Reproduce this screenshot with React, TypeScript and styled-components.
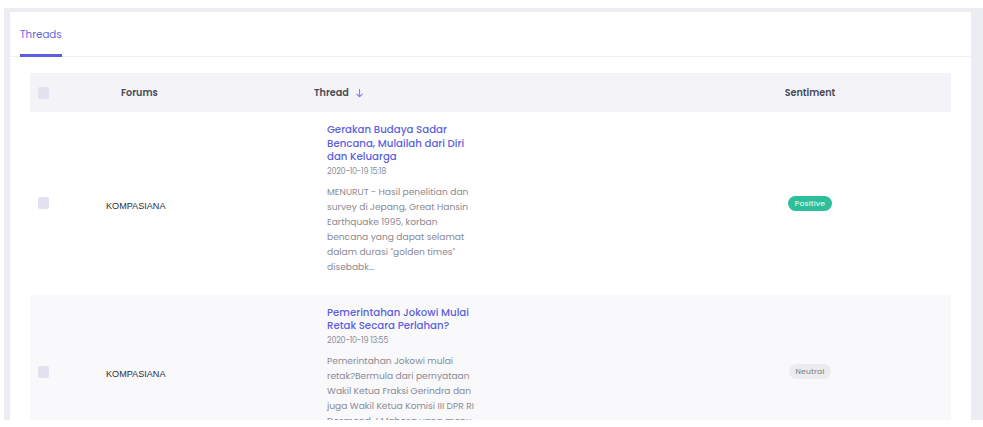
import React from "react";
import styled, { createGlobalStyle } from "styled-components";

const Global = createGlobalStyle`
  html, body { margin: 0; padding: 0; background: #ffffff; }
  body { font-family: "Poppins", "Inter", "Open Sans", sans-serif; }
  * { box-sizing: border-box; }
`;

const Frame = styled.div`
  margin: 8px 0 0 4px;
  height: 412px;
  background: #ececf3;
  padding: 4px 12px 0 6px;
  overflow: hidden;
`;

const Card = styled.div`
  background: #ffffff;
  height: 100%;
  display: flex;
  flex-direction: column;
`;

const Tabs = styled.div`
  display: flex;
  padding: 0 10px;
  border-bottom: 1px solid #f0f0f4;
`;

const Tab = styled.div<{ $active?: boolean }>`
  font-size: 10.3px;
  line-height: 18px;
  color: ${(p) => (p.$active ? "#6466de" : "#777")};
  padding: 14px 0 10px;
  border-bottom: 3px solid ${(p) => (p.$active ? "#5a5ee0" : "transparent")};
  margin-bottom: -1px;
`;

const TableWrap = styled.div`
  padding: 16px 20px 0;
`;

const Grid = styled.div`
  display: grid;
  grid-template-columns: 70px 200px 370px 280px;
`;

const HeadRow = styled(Grid)`
  background: #f3f3f8;
  height: 39px;
  align-items: center;
`;

const Row = styled(Grid)<{ $striped?: boolean }>`
  background: ${(p) => (p.$striped ? "#f9f9fb" : "#ffffff")};
  align-items: center;
`;

const Check = styled.span`
  display: block;
  width: 11px;
  height: 12px;
  border-radius: 2px;
  background: #e2e1ef;
  margin-left: 8px;
`;

const HeadCell = styled.div<{ $pad?: number; $center?: boolean }>`
  font-size: 9.6px;
  font-weight: 600;
  color: #4b4b57;
  padding-left: ${(p) => p.$pad ?? 0}px;
  display: flex;
  align-items: center;
  justify-content: ${(p) => (p.$center ? "center" : "flex-start")};
  gap: 6px;
`;

const SortArrow = styled.svg`
  width: 9px;
  height: 10px;
`;

const Forum = styled.div`
  font-family: "Liberation Sans", Arial, sans-serif;
  font-size: 9.1px;
  color: #2e2e36;
  padding-left: 6px;
  padding-top: 5px;
`;

const ThreadCell = styled.div`
  padding: 11px 0 21px 27px;
`;

const Title = styled.div`
  font-size: 10.2px;
  font-weight: 500;
  line-height: 13.5px;
  color: #5c5fe0;
`;

const Line = styled.span`
  display: block;
  white-space: nowrap;
`;

const DateText = styled.div`
  font-size: 8px;
  line-height: 12px;
  margin-top: 2px;
  color: #8d8d96;
  letter-spacing: -0.2px;
`;

const Body = styled.div`
  font-size: 9.1px;
  line-height: 15px;
  color: #8a8a94;
  margin-top: 6px;
`;

const SentimentCell = styled.div`
  display: flex;
  justify-content: center;
`;

const Badge = styled.span<{ $tone: "positive" | "neutral" }>`
  font-size: 7.6px;
  line-height: 15px;
  padding: 0 7px;
  border-radius: 8px;
  background: ${(p) => (p.$tone === "positive" ? "#2dbf9b" : "#ececee")};
  color: ${(p) => (p.$tone === "positive" ? "#ffffff" : "#7a7a82")};
  letter-spacing: 0.2px;
`;

type Item = {
  forum: string;
  title: string[];
  date: string;
  body: string[];
  sentiment: "Positive" | "Neutral";
};

const items: Item[] = [
  {
    forum: "KOMPASIANA",
    title: ["Gerakan Budaya Sadar", "Bencana, Mulailah dari Diri", "dan Keluarga"],
    date: "2020-10-19 15:18",
    body: [
      "MENURUT - Hasil penelitian dan",
      "survey di Jepang, Great Hansin",
      "Earthquake 1995, korban",
      "bencana yang dapat selamat",
      "dalam durasi \"golden times\"",
      "disebabk...",
    ],
    sentiment: "Positive",
  },
  {
    forum: "KOMPASIANA",
    title: ["Pemerintahan Jokowi Mulai", "Retak Secara Perlahan?"],
    date: "2020-10-19 13:55",
    body: [
      "Pemerintahan Jokowi mulai",
      "retak?Bermula dari pernyataan",
      "Wakil Ketua Fraksi Gerindra dan",
      "juga Wakil Ketua Komisi III DPR RI",
      "Desmond J Mahesa yang meny...",
    ],
    sentiment: "Neutral",
  },
];

export default function App() {
  return (
    <>
      <Global />
      <Frame>
        <Card>
          <Tabs>
            <Tab $active>Threads</Tab>
          </Tabs>
          <TableWrap>
            <HeadRow>
              <HeadCell>
                <Check />
              </HeadCell>
              <HeadCell $pad={21}>Forums</HeadCell>
              <HeadCell $pad={14}>
                Thread
                <SortArrow viewBox="0 0 10 12" fill="none" stroke="#8f7fe6" strokeWidth="1.3" strokeLinecap="round" strokeLinejoin="round">
                  <path d="M5 1.5v9M1.8 7.3 5 10.5l3.2-3.2" />
                </SortArrow>
              </HeadCell>
              <HeadCell $center>Sentiment</HeadCell>
            </HeadRow>
            {items.map((it, i) => (
              <Row key={i} $striped={i % 2 === 1}>
                <div>
                  <Check />
                </div>
                <Forum>{it.forum}</Forum>
                <ThreadCell>
                  <Title>
                    {it.title.map((l, j) => (
                      <Line key={j}>{l}</Line>
                    ))}
                  </Title>
                  <DateText>{it.date}</DateText>
                  <Body>
                    {it.body.map((l, j) => (
                      <Line key={j}>{l}</Line>
                    ))}
                  </Body>
                </ThreadCell>
                <SentimentCell>
                  <Badge $tone={it.sentiment === "Positive" ? "positive" : "neutral"}>{it.sentiment}</Badge>
                </SentimentCell>
              </Row>
            ))}
          </TableWrap>
        </Card>
      </Frame>
    </>
  );
}
